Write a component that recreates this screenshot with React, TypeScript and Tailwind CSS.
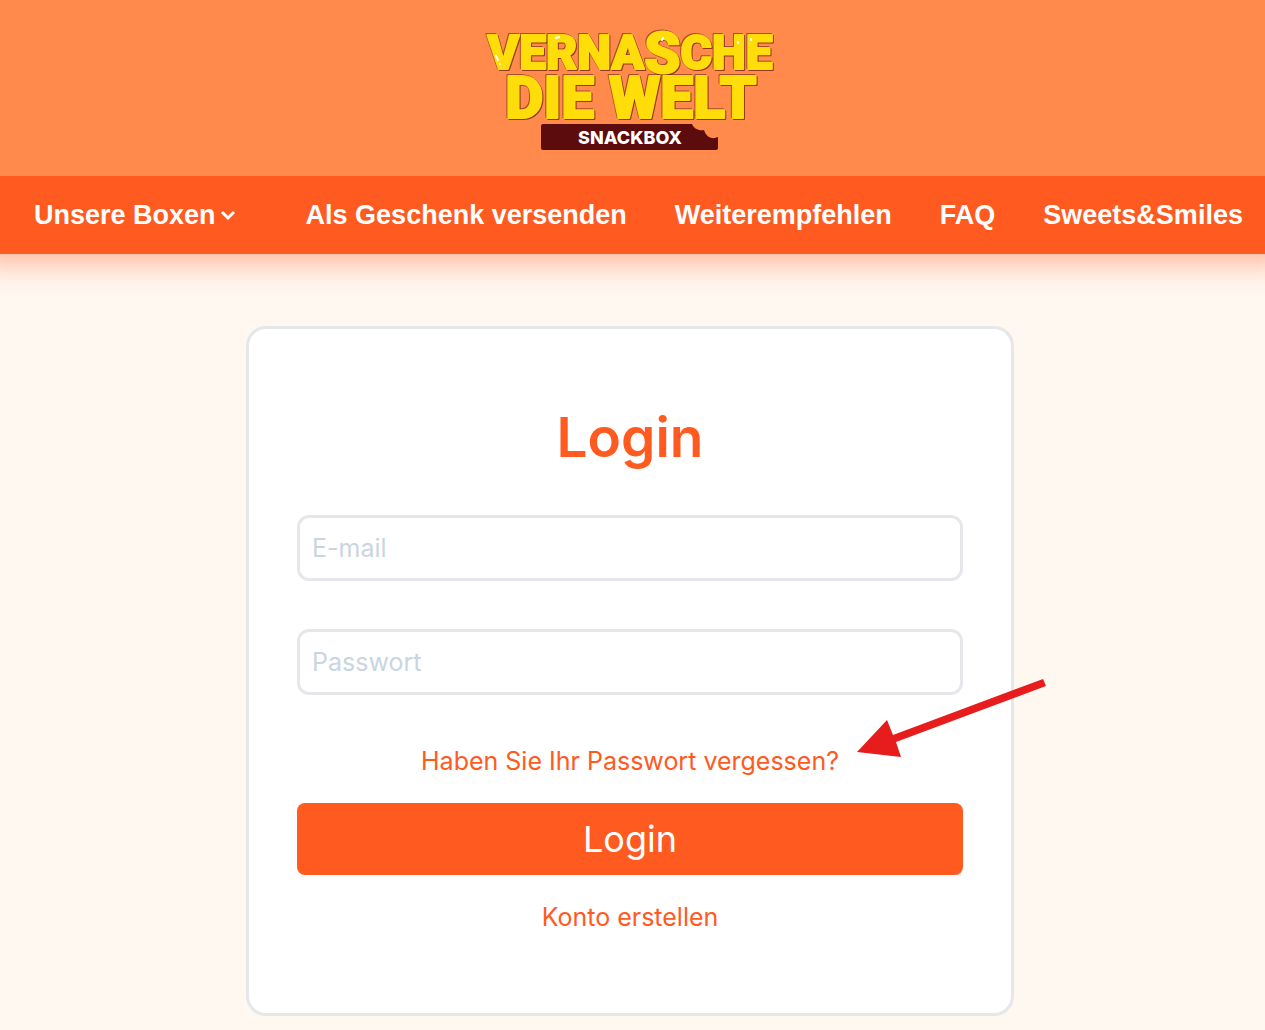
import { type FormEvent } from 'react'

const menus = [
  { path: '#geschenk', label: 'Als Geschenk versenden' },
  { path: '#weiterempfehlen', label: 'Weiterempfehlen' },
  { path: '#faq', label: 'FAQ' },
  { path: '#sweets-smiles', label: 'Sweets&Smiles' },
]

function Logo () {
  return (
    <svg width="292" height="126" viewBox="0 0 292 126" className="overflow-visible" role="img" aria-label="Vernasche die Welt Snackbox">
      {/* yellow letters, the two shadows make the dark rim */}
      <g
        fill="#ffdd0a"
        stroke="#ffdd0a"
        strokeWidth="2"
        strokeLinejoin="round"
        textAnchor="middle"
        className="font-['Roboto',sans-serif] font-black [filter:drop-shadow(1px_1px_0_#7a2410cc)_drop-shadow(-1px_-1px_0_#7a241099)]"
      >
        <text x="146" y="43" fontSize="48">
          VERNA<tspan fontSize="58" dy="4">S</tspan><tspan dy="-4">CHE</tspan>
        </text>
        <text x="147" y="92" fontSize="59">DIE WELT</text>
      </g>
      <g stroke="#fff" strokeWidth="2" strokeLinecap="round">
        <path d="M12 30l2 4M16 38v0M72 12l3-1M178 14l1-2M254 16v1M267 13v1" />
      </g>
      <path
        d="M59 98H208C210 103 215 105 220 104C222 111 228 114 234 111V122Q234 124 232 124H59Q57 124 57 122V100Q57 98 59 98Z"
        fill="#5c0c0c"
      />
      <text x="146" y="118" fontSize="18" fill="#fff" textAnchor="middle" className="font-['Inter',sans-serif] font-extrabold">
        SNACKBOX
      </text>
    </svg>
  )
}

function Navigation () {
  return (
    <nav className="flex items-center gap-12 h-[78px] pl-[34px] pr-5 whitespace-nowrap bg-[#ff5a1f] text-white text-[27px] leading-9 font-bold font-['Liberation_Sans',sans-serif] shadow-[0_-16px_30px_24px_rgba(255,90,31,0.45)]">
      <button type="button" className="flex items-center gap-1 mr-5 cursor-pointer">
        Unsere Boxen
        <svg width="18" height="14" viewBox="0 0 18 14" fill="none" stroke="currentColor" strokeWidth="3">
          <path d="M2 4l6 6l6-6" />
        </svg>
      </button>
      {menus.map((item) => (
        <a key={item.path} href={item.path} className="hover:underline">
          {item.label}
        </a>
      ))}
    </nav>
  )
}

function Field ({ id, type, label }: { id: string, type: string, label: string }) {
  return (
    <div>
      <label htmlFor={id} className="sr-only">{label}</label>
      <input
        id={id}
        type={type}
        placeholder={label}
        className="block w-full h-[66px] px-3 border-3 border-gray-200 rounded-xl bg-white text-gray-900 placeholder:text-slate-300 outline-none focus:border-[#ff5a1f]"
      />
    </div>
  )
}

export default function App () {
  const logIn = (e: FormEvent) => {
    e.preventDefault()
  }

  return (
    <div className="min-h-screen bg-[#fff8f1] font-['Inter',sans-serif] text-[25px]">
      <header>
        <div className="relative z-10 flex justify-center h-44 pt-[26px] pr-[5px] bg-[#ff8a4c]">
          <a href="#start"><Logo /></a>
        </div>
        <Navigation />
      </header>

      <main className="pt-[72px] pb-3 pr-[5px]">
        <form
          onSubmit={logIn}
          className="flex flex-col max-w-3xl mx-auto px-12 pt-[72px] pb-[78px] bg-white border-3 border-gray-200 rounded-[20px] text-[#ff5a1f]"
        >
          <h1 className="text-center text-[55px] leading-[72px] font-semibold">Login</h1>
          <div className="flex flex-col gap-12 mt-[42px]">
            <Field id="email" type="email" label="E-mail" />
            <Field id="password" type="password" label="Passwort" />
          </div>
          <div className="relative mt-12 text-center leading-9">
            <a href="#passwort" className="hover:underline">Haben Sie Ihr Passwort vergessen?</a>
            <svg
              className="absolute -top-[65px] -right-[83px] pointer-events-none"
              width="190"
              height="80"
              viewBox="0 0 190 80"
              fill="#e71c1c"
              aria-hidden="true"
            >
              <path d="M1 74L31 42L37 57L187 1L190 8L40 64L45 79Z" />
            </svg>
          </div>
          <button type="submit" className="h-[72px] mt-6 rounded-lg bg-[#ff5a1f] text-white text-4xl cursor-pointer">
            Login
          </button>
          <a href="#konto" className="self-center mt-6 leading-9 hover:underline">Konto erstellen</a>
        </form>
      </main>
    </div>
  )
}
